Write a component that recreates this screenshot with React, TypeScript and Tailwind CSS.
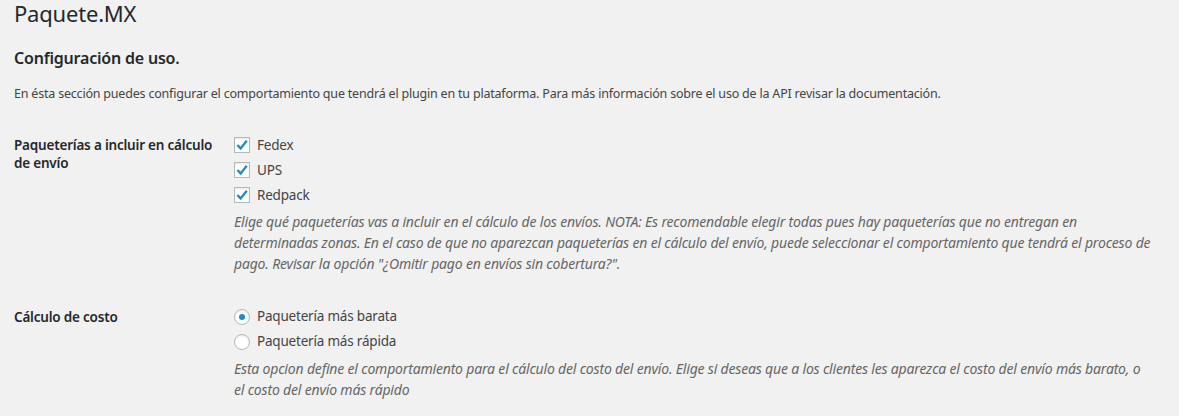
import React from "react";

function Checkbox({ label }: { label: string }) {
  return (
    <label className="flex h-[25px] items-start">
      <span className="mt-[4px] flex h-4 w-4 shrink-0 items-center justify-center border border-[#b4b9be] bg-white shadow-[inset_0_1px_2px_rgba(0,0,0,0.1)]">
        <svg viewBox="0 0 14 14" className="h-[14px] w-[14px]">
          <path d="M2.4 7 L5.6 10.4 L11.8 2.8" fill="none" stroke="#1e8cbe" strokeWidth="2.3" />
        </svg>
      </span>
      <span className="ml-[7px] text-[13.5px] leading-[25px] tracking-[-0.2px] text-[#444]">{label}</span>
    </label>
  );
}

function Radio({ label, checked }: { label: string; checked?: boolean }) {
  return (
    <label className="flex h-[25px] items-start">
      <span className="mt-[5px] flex h-4 w-4 shrink-0 items-center justify-center rounded-full border border-[#b4b9be] bg-white shadow-[inset_0_1px_2px_rgba(0,0,0,0.1)]">
        {checked && <span className="h-[6px] w-[6px] rounded-full bg-[#1e8cbe]" />}
      </span>
      <span className="ml-[7px] text-[13.5px] leading-[25px] tracking-[-0.2px] text-[#444]">{label}</span>
    </label>
  );
}

function Desc({ lines, extra }: { lines: string[]; extra?: boolean }) {
  return (
    <p
      className={
        extra
          ? "mt-[4px] text-[14px] italic leading-[21px] tracking-[-0.18px] text-[#666]"
          : "mt-[3px] text-[14px] italic leading-[21px] tracking-[-0.18px] text-[#666]"
      }
    >
      {lines.map((l, i) => (
        <span key={i} className="block whitespace-nowrap">
          {l}
        </span>
      ))}
    </p>
  );
}

export default function App() {
  return (
    <div className="min-h-screen bg-[#f1f1f1] pl-[14px] font-['Segoe_UI','Noto_Sans',sans-serif] text-[#444]">
      <h1 className="text-[22px] font-normal leading-[27px] tracking-[-0.2px] text-[#23282d]">Paquete.MX</h1>
      <h2 className="mt-[20px] text-[16px] font-semibold leading-[22px] tracking-[-0.2px] text-[#23282d]">
        Configuración de uso.
      </h2>
      <p className="mt-[16px] text-[12.5px] leading-[18px] tracking-[-0.2px] text-[#444]">
        En ésta sección puedes configurar el comportamiento que tendrá el plugin en tu plataforma. Para más información sobre el uso de la API revisar la documentación.
      </p>

      <div className="mt-[30px] grid grid-cols-[220px_1fr]">
        <div className="pt-[3px] text-[13.5px] font-semibold leading-[18px] tracking-[-0.2px] text-[#23282d]">
          Paqueterías a incluir en cálculo
          <br />
          de envío
        </div>
        <div>
          <Checkbox label="Fedex" />
          <Checkbox label="UPS" />
          <Checkbox label="Redpack" />
          <Desc
            lines={[
              "Elige qué paqueterías vas a incluir en el cálculo de los envíos. NOTA: Es recomendable elegir todas pues hay paqueterías que no entregan en",
              "determinadas zonas. En el caso de que no aparezcan paqueterías en el cálculo del envío, puede seleccionar el comportamiento que tendrá el proceso de",
              "pago. Revisar la opción \"¿Omitir pago en envíos sin cobertura?\".",
            ]}
          />
        </div>

        <div className="mt-[30px] pt-[3.5px] text-[13.5px] font-semibold leading-[18px] tracking-[-0.2px] text-[#23282d]">
          Cálculo de costo
        </div>
        <div className="mt-[30px]">
          <Radio label="Paquetería más barata" checked />
          <Radio label="Paquetería más rápida" />
          <Desc
            extra
            lines={[
              "Esta opcion define el comportamiento para el cálculo del costo del envío. Elige si deseas que a los clientes les aparezca el costo del envío más barato, o",
              "el costo del envío más rápido",
            ]}
          />
        </div>
      </div>
    </div>
  );
}
